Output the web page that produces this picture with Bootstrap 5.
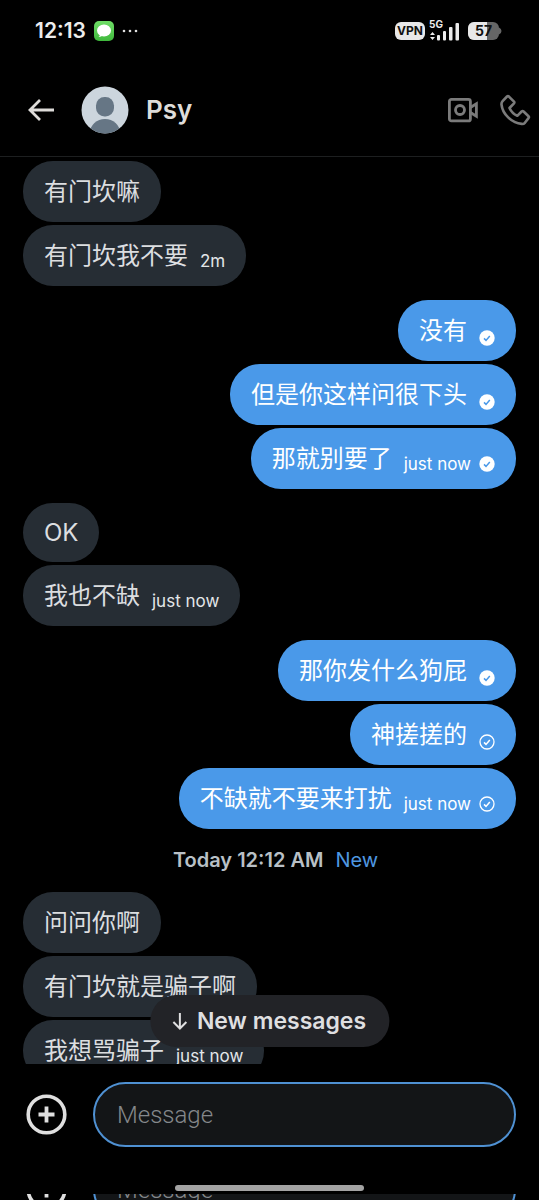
<!DOCTYPE html>
<html lang="en" data-bs-theme="dark">
<head>
<meta charset="utf-8">
<meta name="viewport" content="width=device-width, initial-scale=1">
<title>Psy – Messages</title>
<link href="https://cdn.jsdelivr.net/npm/bootstrap@5.3.0/dist/css/bootstrap.min.css" rel="stylesheet">
<style>
  body { background: #000; color: #dcdee0; font-family: Inter, "Noto Sans CJK SC", sans-serif; }
  svg { display: block; flex: none; }
  .status { height: 62px; padding: 0 37px 0 35px; color: #ececec; }
  .clock { font-size: 21px; line-height: 28px; font-weight: 600; }
  .vpn { width: 30px; height: 18px; border-radius: 6px; background: #e8e8e8; color: #111; font-size: 12px; line-height: 18px; font-weight: 700; }
  .topbar { height: 95px; padding: 2px 8px 0 26px; border-bottom: 1px solid #1d1f20; }
  .topbar h1 { font-size: 26px; line-height: 32px; font-weight: 600; color: #dedcd9; }
  .iconbtn { background: none; border: 0; padding: 0; color: inherit; }
  .calls { color: #7b7b7b; gap: 20px; }
  .chat { min-height: 0; }
  .thread { min-height: 0; padding: 4px 23px 0; gap: 14px; }
  .group { gap: 3px; flex: none; }
  .bubble { padding: 13px 21px; border-radius: 30px; background: #262d34; gap: 12px; font-size: 24px; line-height: 35px; white-space: nowrap; }
  .bubble.latin { line-height: 33px; }
  .sent .bubble { background: #4a99e9; color: #fff; }
  .meta { gap: 8px; font-size: 17px; line-height: 24px; color: #e3e6e8; }
  .sent .meta { color: #fff; }
  .tick { height: 18px; }
  .daymark { gap: 12px; padding-left: 12px; font-size: 20px; line-height: 35px; color: #b9c0c6; font-weight: 600; flex: none; }
  .daymark span { color: #4f97e0; font-weight: 400; }
  .jump { bottom: 17px; height: 52px; padding: 0 23px 0 21px; gap: 9px; border: 0; border-radius: 26px; background: #222327; color: #dfdfe0; font-size: 23px; line-height: 30px; font-weight: 600; white-space: nowrap; }
  .entry { padding-top: 18px; }
  .composer { padding: 0 23px 0 26px; gap: 26px; color: #dfdfdf; }
  .composer input { height: 65px; min-width: 0; padding: 0 22px; border: 2px solid #4f91d3; border-radius: 33px; background: #131517; color: #dfdfdf; font-family: Roboto, sans-serif; font-weight: 300; font-size: 24px; line-height: 30px; outline: 0; }
  .composer input::placeholder { color: #85888b; opacity: 1; }
  .homebar { width: 35%; height: 6px; border-radius: 3px; background: #a3a3a3; margin: 38px auto 3px; }
  .peek { height: 6px; flex: none; }
  .peek .composer { margin-top: -37px; }
</style>
</head>
<body>
<svg class="d-none">
  <symbol id="seen" viewBox="0 0 16 16"><circle cx="8" cy="8" r="7.7" fill="#fff"/><path d="M5 8.4l2 2 3.8-4.4" fill="none" stroke="#4a99e9" stroke-width="1.5"/></symbol>
  <symbol id="sent" viewBox="0 0 16 16"><circle cx="8" cy="8" r="7" fill="none" stroke="#fff" stroke-width="1.3"/><path d="M5 8.4l2 2 3.8-4.4" fill="none" stroke="#fff" stroke-width="1.5"/></symbol>
  <symbol id="plus" viewBox="0 0 41 41"><circle cx="20.500" cy="20.500" r="18.300" fill="none" stroke="currentColor" stroke-width="3.6"/><path d="M20.500 12.500v16M12.500 20.500h16" stroke="currentColor" stroke-width="3.800"/></symbol>
</svg>
<div class="vh-100 d-flex flex-column overflow-hidden">
  <div class="status d-flex align-items-center justify-content-between flex-shrink-0">
    <div class="d-flex align-items-center gap-2">
      <span class="clock">12:13</span>
      <svg width="20" height="20" viewBox="0 0 20 20"><defs><linearGradient id="g" x2="0" y2="1"><stop stop-color="#6fdd67"/><stop offset="1" stop-color="#3fb83c"/></linearGradient></defs><rect width="20" height="20" rx="5" fill="url(#g)"/><ellipse cx="10" cy="9.500" rx="7" ry="6" fill="#fff"/><path d="M6 13q0 2-1.500 3 3 0 4.500-2z" fill="#fff"/></svg>
      <svg width="18" height="4" viewBox="0 0 18 4" fill="#e0e0e0"><circle cx="2" cy="2" r="1.300"/><circle cx="8" cy="2" r="1.300"/><circle cx="14" cy="2" r="1.300"/></svg>
    </div>
    <div class="d-flex align-items-center">
      <span class="vpn text-center me-1">VPN</span>
      <svg class="me-2" width="31" height="24" viewBox="0 0 31 24" fill="#ececec"><text x="0" y="9" font-size="10" font-weight="700">5G</text><path d="M1 16l2.500-3 2.500 3zM1 18h5l-2.500 3z"/><rect x="8" y="16" width="3" height="5.500" rx="1"/><rect x="14" y="12" width="3" height="9.500" rx="1"/><rect x="20" y="8" width="3.500" height="13.500" rx="1"/><rect x="26.500" y="4" width="3.500" height="17.500" rx="1"/></svg>
      <svg width="34" height="18" viewBox="0 0 34 18"><clipPath id="b"><rect width="31" height="18" rx="6"/></clipPath><g clip-path="url(#b)"><rect width="31" height="18" fill="#666"/><rect width="19" height="18" fill="#e8e8e8"/></g><path d="M31 5.500q2.500 1 2.500 3.500t-2.500 3.500z" fill="#666"/><text x="15.500" y="14" font-size="14" font-weight="700" text-anchor="middle" fill="#111">57</text></svg>
    </div>
  </div>

  <header class="topbar d-flex align-items-center flex-shrink-0">
    <button class="iconbtn" type="button" aria-label="Back"><svg width="30" height="24" viewBox="0 0 30 24" fill="none" stroke="#dedcd9" stroke-width="2.800"><path d="M14 2L4 12l10 10M4 12h24"/></svg></button>
    <svg class="ms-4" width="50" height="48" viewBox="0 0 50 48"><clipPath id="a"><circle cx="25" cy="24" r="23.500"/></clipPath><g clip-path="url(#a)"><rect width="50" height="48" fill="#ccd5dd"/><rect x="16" y="11" width="18" height="19.500" rx="8.500" fill="#667685"/><ellipse cx="25" cy="47" rx="15" ry="14" fill="#667685"/></g></svg>
    <h1 class="mb-0 ms-3">Psy</h1>
    <div class="calls d-flex align-items-center ms-auto">
      <button class="iconbtn" type="button" aria-label="Video call"><svg width="34" height="30" viewBox="0 0 34 30" fill="none" stroke="currentColor" stroke-width="2.800"><rect x="4.400" y="4.400" width="21" height="21.500" rx="2"/><circle cx="15" cy="15" r="4.500"/><path d="M25.400 12.500l6-3.800v12.600l-6-3.800"/></svg></button>
      <button class="iconbtn" type="button" aria-label="Audio call"><svg width="32" height="32" viewBox="0 0 32 32" fill="none" stroke="currentColor" stroke-width="2.600" stroke-linejoin="round"><path d="M9.700 2.300L15 7.700Q15.700 8.500 15 9.300L10.500 14q2.500 5.500 7.800 7.800l4.300-4.300q1-.8 2 0l4.900 4.700q.9.900 0 1.900l-3.600 4.700q-1.200 1.300-3.200 1.100C12.500 29 3.500 20 2.500 10.500Q2.300 8.500 3.600 7.100L8 2.500q.9-.9 1.700-.2z"/></svg></button>
    </div>
  </header>

  <div class="chat position-relative flex-grow-1 d-flex flex-column">
    <main class="thread flex-grow-1 d-flex flex-column overflow-hidden">
      <div class="group d-flex flex-column align-items-start">
        <div class="bubble">有门坎嘛</div>
        <div class="bubble d-flex align-items-end"><span>有门坎我不要</span><span class="meta">2m</span></div>
      </div>
      <div class="group sent d-flex flex-column align-items-end">
        <div class="bubble d-flex align-items-end"><span>没有</span><span class="tick"><svg width="16" height="16"><use href="#seen"/></svg></span></div>
        <div class="bubble d-flex align-items-end"><span>但是你这样问很下头</span><span class="tick"><svg width="16" height="16"><use href="#seen"/></svg></span></div>
        <div class="bubble d-flex align-items-end"><span>那就别要了</span><span class="meta d-flex align-items-center">just now<svg width="16" height="16"><use href="#seen"/></svg></span></div>
      </div>
      <div class="group d-flex flex-column align-items-start">
        <div class="bubble latin">OK</div>
        <div class="bubble d-flex align-items-end"><span>我也不缺</span><span class="meta">just now</span></div>
      </div>
      <div class="group sent d-flex flex-column align-items-end">
        <div class="bubble d-flex align-items-end"><span>那你发什么狗屁</span><span class="tick"><svg width="16" height="16"><use href="#seen"/></svg></span></div>
        <div class="bubble d-flex align-items-end"><span>神搓搓的</span><span class="tick"><svg width="16" height="16"><use href="#sent"/></svg></span></div>
        <div class="bubble d-flex align-items-end"><span>不缺就不要来打扰</span><span class="meta d-flex align-items-center">just now<svg width="16" height="16"><use href="#sent"/></svg></span></div>
      </div>
      <div class="daymark d-flex justify-content-center">Today 12:12 AM <span>New</span></div>
      <div class="group d-flex flex-column align-items-start">
        <div class="bubble">问问你啊</div>
        <div class="bubble">有门坎就是骗子啊</div>
        <div class="bubble d-flex align-items-end"><span>我想骂骗子</span><span class="meta">just now</span></div>
      </div>
    </main>
    <button class="jump position-absolute start-50 translate-middle-x d-flex align-items-center" type="button"><svg width="17" height="20" viewBox="0 0 17 20" fill="none" stroke="currentColor" stroke-width="2"><path d="M8.500 2v15.500M2 11l6.500 6.500L15 11"/></svg>New messages</button>
  </div>

  <footer class="entry flex-shrink-0">
    <div class="composer d-flex align-items-center">
      <button class="iconbtn" type="button" aria-label="Add attachment"><svg width="41" height="41"><use href="#plus"/></svg></button>
      <input class="flex-grow-1" type="text" placeholder="Message" aria-label="Message">
    </div>
    <div class="homebar"></div>
  </footer>
  <div class="peek overflow-hidden" aria-hidden="true">
    <div class="composer d-flex align-items-center">
      <button class="iconbtn" type="button" tabindex="-1"><svg width="41" height="41"><use href="#plus"/></svg></button>
      <input class="flex-grow-1" type="text" placeholder="Message" tabindex="-1">
    </div>
  </div>
</div>
<script src="https://cdn.jsdelivr.net/npm/bootstrap@5.3.0/dist/js/bootstrap.bundle.min.js"></script>
</body>
</html>
